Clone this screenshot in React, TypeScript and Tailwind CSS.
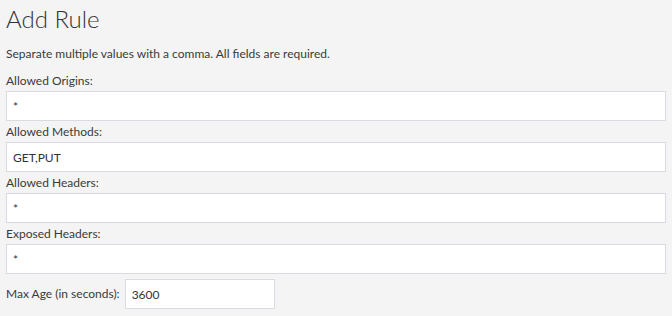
import { useState } from 'react';

const fields = [
  { label: 'Allowed Origins:', value: '*' },
  { label: 'Allowed Methods:', value: 'GET,PUT' },
  { label: 'Allowed Headers:', value: '*' },
  { label: 'Exposed Headers:', value: '*' },
];

export default function App() {
  const [values, setValues] = useState(fields.map((f) => f.value));
  const [maxAge, setMaxAge] = useState('3600');

  return (
    <div className="w-[672px] h-[316px] bg-[#f4f4f4] text-[#3a3a3a] px-[6px] overflow-hidden font-['Lato','Open_Sans',sans-serif]">
      <h1 className="text-[24px] font-light leading-[36px] pt-[1px] text-[#333]">Add Rule</h1>
      <p className="text-[12px] leading-[16px] mt-[9px] mb-[8px]">
        Separate multiple values with a comma. All fields are required.
      </p>
      {fields.map((f, i) => (
        <div key={f.label} className="flex flex-col">
          <label className="text-[12px] leading-[21px] h-[21px]">{f.label}</label>
          <input
            className="w-[660px] h-[30px] bg-white border border-[#dadae3] px-[6px] text-[12px] text-[#333] outline-none"
            value={values[i]}
            onChange={(e) => setValues(values.map((v, j) => (j === i ? e.target.value : v)))}
          />
        </div>
      ))}
      <div className="flex items-center gap-[5px] mt-[5px]">
        <label className="text-[12px]">Max Age (in seconds):</label>
        <input
          className="w-[150px] h-[30px] bg-white border border-[#dadae3] px-[6px] text-[12px] text-[#333] outline-none"
          value={maxAge}
          onChange={(e) => setMaxAge(e.target.value)}
        />
      </div>
    </div>
  );
}
